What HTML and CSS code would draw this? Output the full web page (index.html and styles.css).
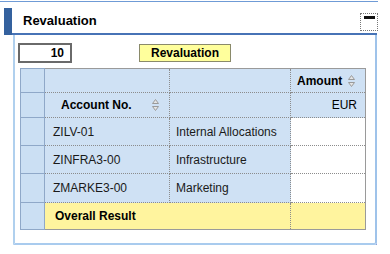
FILE: index.html
```html
<!DOCTYPE html>
<html lang="en">
<head>
    <meta charset="UTF-8">
    <meta name="viewport" content="width=device-width, initial-scale=1.0">
    <title>Revaluation</title>
    <link rel="stylesheet" href="styles.css">
</head>
<body>
    <div class="portlet">
        <div class="portlet-head">
            <div class="marker"></div>
            <div class="head-bar">
                <span class="head-title">Revaluation</span>
                <span class="btn-min"><span class="btn-min-bar"></span></span>
            </div>
        </div>
        <div class="portlet-body">
            <div class="toolbar">
                <div class="count">10</div>
                <div class="btn-reval">Revaluation</div>
            </div>
            <table class="grid">
                <colgroup>
                    <col class="c-row">
                    <col class="c-acct">
                    <col class="c-text">
                    <col class="c-amt">
                </colgroup>
                <tr class="r-head1">
                    <td class="rowhead"></td>
                    <td></td>
                    <td></td>
                    <td class="hd">
                        <span class="hd-inner">Amount
                            <svg class="sort" width="7" height="12" viewBox="0 0 7 12"><path d="M3.5 0.5 L6.5 4.5 L0.5 4.5 Z" fill="#e4e4e4" stroke="#9a9a9a"/><path d="M0.5 7.5 L6.5 7.5 L3.5 11.5 Z" fill="#e4e4e4" stroke="#9a9a9a"/></svg>
                        </span>
                    </td>
                </tr>
                <tr class="r-head2">
                    <td class="rowhead"></td>
                    <td class="hd hd-acct">
                        <span class="hd-inner">Account No.
                            <svg class="sort sort-acct" width="7" height="12" viewBox="0 0 7 12"><path d="M3.5 0.5 L6.5 4.5 L0.5 4.5 Z" fill="#e4e4e4" stroke="#9a9a9a"/><path d="M0.5 7.5 L6.5 7.5 L3.5 11.5 Z" fill="#e4e4e4" stroke="#9a9a9a"/></svg>
                        </span>
                    </td>
                    <td></td>
                    <td class="unit">EUR</td>
                </tr>
                <tr class="r-data">
                    <td class="rowhead"></td>
                    <td class="key">ZILV-01</td>
                    <td class="key key-text">Internal Allocations</td>
                    <td class="val"></td>
                </tr>
                <tr class="r-data">
                    <td class="rowhead"></td>
                    <td class="key">ZINFRA3-00</td>
                    <td class="key key-text">Infrastructure</td>
                    <td class="val"></td>
                </tr>
                <tr class="r-data r-last">
                    <td class="rowhead"></td>
                    <td class="key">ZMARKE3-00</td>
                    <td class="key key-text">Marketing</td>
                    <td class="val"></td>
                </tr>
                <tr class="r-total">
                    <td class="rowhead"></td>
                    <td class="total" colspan="2">Overall Result</td>
                    <td class="total"></td>
                </tr>
            </table>
        </div>
    </div>
</body>
</html>
```

FILE: styles.css
```css
body {
    margin: 0;
    padding: 0;
    background: #fff;
    font-family: "Liberation Sans", Arial, sans-serif;
    font-size: 12px;
    color: #000;
}

.portlet {
    width: 378px;
    margin-top: 1px;
    border-top: 1px solid #6f9bd6;
}

/* title bar */
.portlet-head {
    display: flex;
    padding-top: 6px;
}

.marker {
    width: 8px;
    height: 27px;
    margin-left: 4px;
    background-color: #34619e;
}

.head-bar {
    flex: 1;
    height: 25px;
    margin-right: 1px;
    padding-left: 11px;
    display: flex;
    align-items: center;
    justify-content: space-between;
    border-bottom: 2px solid #4773b6;
}

.head-title {
    font-size: 13px;
    font-weight: bold;
    line-height: 15px;
}

.btn-min {
    align-self: flex-end;
    margin-bottom: 2px;
    margin-right: -1px;
    width: 16px;
    height: 16px;
    border: 1px dotted #777;
    background: #fff;
    display: flex;
    justify-content: center;
}

.btn-min-bar {
    width: 11px;
    height: 3px;
    margin-top: 2px;
    background: #111;
}

/* body */
.portlet-body {
    margin-left: 13px;
    width: 360px;
    border-left: 2px solid #b0d0ee;
    border-right: 2px solid #9fc3ea;
    border-bottom: 2px solid #a9cbee;
    border-radius: 0 0 3px 0;
    box-shadow: 0 3px 0 #7f95d8;
    padding-bottom: 13px;
}

.toolbar {
    display: flex;
    align-items: center;
    padding-top: 8px;
    padding-left: 3px;
}

.count {
    width: 44px;
    height: 16px;
    padding-right: 6px;
    border: 2px solid #6a6a6a;
    text-align: right;
    font-weight: bold;
    line-height: 16px;
}

.btn-reval {
    margin-left: 67px;
    width: 90px;
    height: 16px;
    line-height: 16px;
    border: 1px solid #8a8a6a;
    background: #ffff9c;
    text-align: center;
    font-weight: bold;
}

/* grid */
.grid {
    margin-top: 5px;
    margin-left: 5px;
    width: 345px;
    border-collapse: collapse;
    table-layout: fixed;
    border: 1px solid #9a9a9a;
}

.c-row { width: 24px; }
.c-acct { width: 125px; }
.c-text { width: 121px; }
.c-amt { width: 75px; }

.grid td {
    padding: 0;
    border: 1px dotted #8c8c8c;
    background: #cfe1f4;
    vertical-align: middle;
    white-space: nowrap;
}

.grid td.rowhead {
    border: 1px solid #8fa8c8;
    background: #cbdff3;
}

.r-head1 { height: 24px; }
.r-head2 { height: 25px; }
.r-data { height: 28px; }
.r-last { height: 29px; }
.r-total { height: 27px; }

.hd {
    font-weight: bold;
}

.hd-inner {
    display: flex;
    align-items: center;
    padding-left: 6px;
}

.sort {
    margin-left: 6px;
}

.hd-acct .hd-inner {
    padding-left: 16px;
}

.sort-acct {
    margin-left: 20px;
}

.unit {
    text-align: right;
    padding-right: 8px !important;
}

.key {
    padding-left: 8px !important;
    color: #1a1a1a;
}

.key-text {
    padding-left: 6px !important;
}

.grid td.val {
    background: #fff;
}

.grid td.total {
    background: #fff49e;
    font-weight: bold;
    padding-left: 10px;
}
```
